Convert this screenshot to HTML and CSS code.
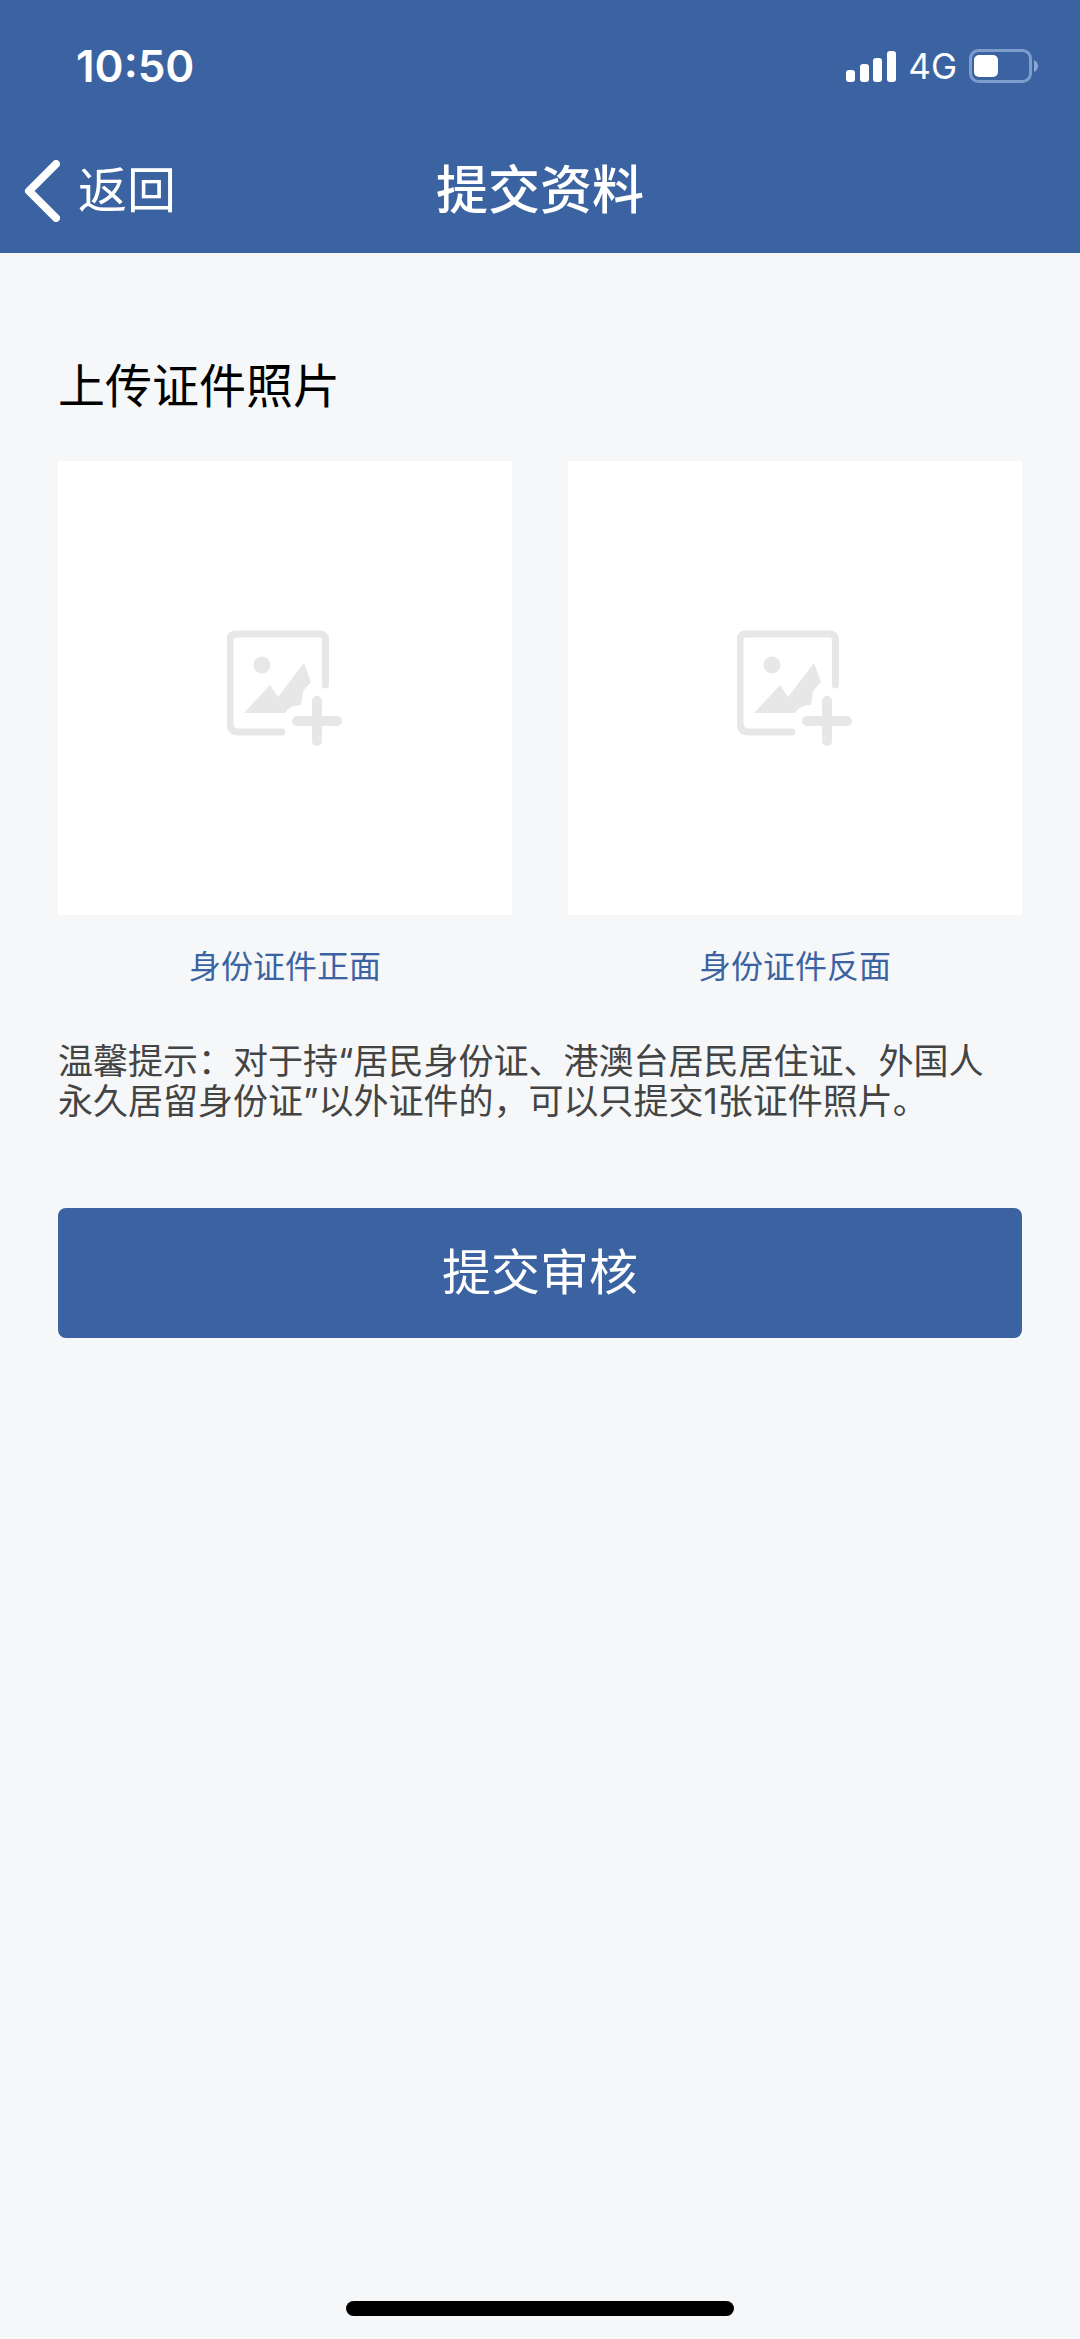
FILE: index.html
```html
<!DOCTYPE html>
<html lang="zh-CN">
<head>
<meta charset="utf-8">
<meta name="viewport" content="width=device-width, initial-scale=1">
<title>提交资料</title>
<link rel="stylesheet" href="styles.css">
</head>
<body>
<svg class="defs" aria-hidden="true">
  <symbol id="add-photo" viewBox="0 0 116 116">
    <path d="M98.500 55V10q0-6-6-6H9Q3 4 3 10V93q0 9 9 9H55" fill="none" stroke="currentColor" stroke-width="7" stroke-linecap="round" stroke-linejoin="round"/>
    <circle cx="35" cy="35" r="8.500" fill="currentColor"/>
    <path d="M17 83 43 55l8 12L77 33l7 19-8 9-2 14q-11 0-16 8Z" fill="currentColor"/>
    <path d="M90 71v40M70 91h40" fill="none" stroke="currentColor" stroke-width="10" stroke-linecap="round"/>
  </symbol>
</svg>

<header class="header">
  <div class="status">
    <time class="clock">10:50</time>
    <div class="indicators">
      <svg class="signal" viewBox="0 0 50 32" fill="#fff" aria-hidden="true">
        <rect x="0" y="20" width="9" height="12" rx="3"/>
        <rect x="14" y="14" width="9" height="18" rx="3"/>
        <rect x="27" y="8" width="9" height="24" rx="3"/>
        <rect x="41" y="1" width="9" height="31" rx="3"/>
      </svg>
      <span class="network">4G</span>
      <svg class="battery" viewBox="0 0 70 34" aria-hidden="true">
        <rect x="1.500" y="1.500" width="60" height="31" rx="8" fill="none" stroke="#7f9dcc" stroke-width="3"/>
        <rect x="5" y="6" width="24" height="22" rx="5" fill="#fff"/>
        <path d="M65 11q4 2 4 6t-4 6Z" fill="#8aa6d2"/>
      </svg>
    </div>
  </div>
  <nav class="navbar">
    <a class="back" href="#">
      <svg class="chevron" viewBox="0 0 36 62" aria-hidden="true"><path d="M32 4 5 31 32 58" fill="none" stroke="currentColor" stroke-width="8" stroke-linecap="round" stroke-linejoin="round"/></svg>
      返回
    </a>
    <h1 class="title">提交资料</h1>
  </nav>
</header>

<main class="content">
  <h2 class="heading">上传证件照片</h2>
  <div class="uploads">
    <div class="upload">
      <button class="card" type="button" aria-labelledby="front"><svg class="photo" aria-hidden="true"><use href="#add-photo"/></svg></button>
      <span class="caption" id="front">身份证件正面</span>
    </div>
    <div class="upload">
      <button class="card" type="button" aria-labelledby="reverse"><svg class="photo" aria-hidden="true"><use href="#add-photo"/></svg></button>
      <span class="caption" id="reverse">身份证件反面</span>
    </div>
  </div>
  <p class="note">温馨提示：对于持“居民身份证、港澳台居民居住证、外国人<br>永久居留身份证”以外证件的，可以只提交1张证件照片。</p>
  <button class="submit" type="button">提交审核</button>
</main>

<footer class="home"><div class="home-bar"></div></footer>
</body>
</html>
```
FILE: styles.css
```css
* {
  box-sizing: border-box;
}

body {
  margin: 0;
  min-height: 100vh;
  display: flex;
  flex-direction: column;
  background: #f5f7f9;
  color: #000;
  font-family: Inter, "Noto Sans CJK SC", sans-serif;
}

button {
  border: 0;
  padding: 0;
  font: inherit;
}

.defs {
  position: absolute;
  width: 0;
  height: 0;
}

.header {
  background: #3c63a1;
  color: #fff;
}

.status {
  display: flex;
  justify-content: space-between;
  align-items: center;
  height: 132px;
  padding: 0 41px 0 76px;
}

.clock {
  font-size: 44px;
  font-weight: 600;
}

.indicators {
  display: flex;
  align-items: center;
}

.signal {
  width: 50px;
  height: 32px;
}

.network {
  margin: 0 12px;
  font-size: 35px;
  line-height: 40px;
}

.battery {
  width: 70px;
  height: 34px;
}

.navbar {
  display: grid;
  grid-template-columns: 1fr auto 1fr;
  align-items: center;
  height: 121px;
  padding: 0 24px 4px;
}

.back {
  display: flex;
  align-items: center;
  gap: 18px;
  color: inherit;
  font-size: 49px;
  line-height: 72px;
  text-decoration: none;
}

.chevron {
  width: 36px;
  height: 62px;
}

.title {
  margin: 0;
  font-size: 52px;
  font-weight: 500;
  line-height: 72px;
}

.content {
  flex: 1;
  padding: 97px 58px 0;
}

.heading {
  margin: 0 0 39px;
  font-size: 47px;
  font-weight: 400;
  line-height: 72px;
}

.uploads {
  display: grid;
  grid-template-columns: 1fr 1fr;
  gap: 56px;
}

.upload {
  display: flex;
  flex-direction: column;
  align-items: center;
  gap: 28px;
}

.card {
  display: flex;
  align-items: center;
  justify-content: center;
  width: 100%;
  aspect-ratio: 1;
  background: #fff;
  color: #e7e7e7;
}

.photo {
  width: 116px;
  height: 116px;
}

.caption {
  color: #3c63a1;
  font-size: 32px;
  line-height: 48px;
}

.note {
  margin: 50px 0 87px;
  color: #444;
  font-size: 35px;
  line-height: 40px;
}

.submit {
  display: block;
  width: 100%;
  border-radius: 8px;
  padding: 29px 0;
  background: #3c63a1;
  color: #fff;
  font-size: 49px;
  line-height: 72px;
}

.home {
  padding: 24px 0 23px;
}

.home-bar {
  width: 36%;
  height: 15px;
  margin: 0 auto;
  border-radius: 8px;
  background: #000;
}
```
